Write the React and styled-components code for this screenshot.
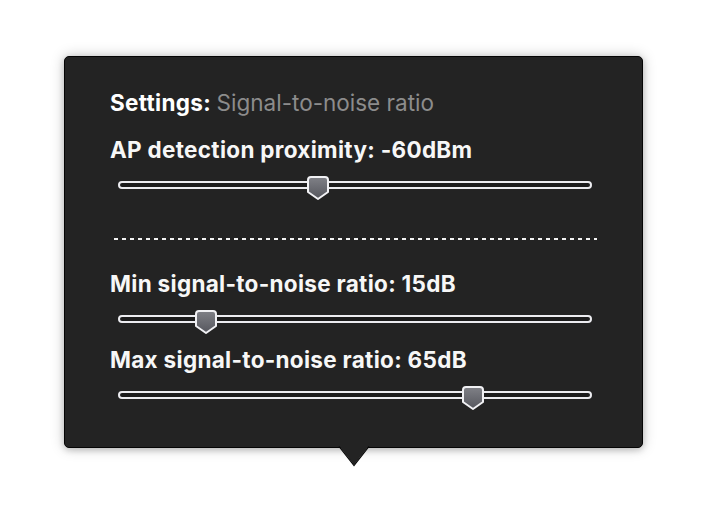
import React from "react";
import styled, { createGlobalStyle } from "styled-components";

const Global = createGlobalStyle`
  html, body { margin: 0; padding: 0; background: #ffffff; }
  body { font-family: Inter, "Noto Sans", "Liberation Sans", sans-serif; }
`;

const Page = styled.div`
  display: flex;
  align-items: flex-start;
  padding: 56px 0 0 64px;
  height: 522px;
  box-sizing: border-box;
`;

const Popover = styled.div`
  position: relative;
  width: 579px;
  height: 392px;
  box-sizing: border-box;
  background: #232323;
  border: 1px solid #050505;
  border-radius: 5px;
  box-shadow: 0 0 14px rgba(0, 0, 0, 0.22), 0 2px 6px rgba(0, 0, 0, 0.18);
  padding: 33px 0 0 45px;
  display: flex;
  flex-direction: column;
`;

const Arrow = styled.svg`
  position: absolute;
  left: 274px;
  bottom: -20px;
  width: 30px;
  height: 21px;
  overflow: visible;
`;

const Title = styled.div`
  font-size: 22.5px;
  line-height: 26px;
  font-weight: 700;
  color: #ffffff;
  letter-spacing: 0.3px;
  white-space: nowrap;
`;

const Subtle = styled.span`
  font-weight: 400;
  color: #8c8c8c;
  letter-spacing: 0px;
`;

const Label = styled.div`
  margin-top: ${(p) => p.$gap}px;
  font-size: 22.5px;
  line-height: 26px;
  font-weight: 700;
  color: #f7f7f7;
  letter-spacing: 0.3px;
  white-space: nowrap;
`;

const SliderWrap = styled.div`
  position: relative;
  margin: 13px 0 0 8px;
  width: 474px;
  height: 24px;
`;

const Track = styled.div`
  position: absolute;
  left: 0;
  right: 0;
  top: 5px;
  height: 8px;
  box-sizing: border-box;
  border: 2px solid #ececf0;
  border-radius: 4px;
  background: #1c1c1c;
`;

const Thumb = styled.svg`
  position: absolute;
  top: 0;
  width: 22px;
  height: 24px;
`;

const Divider = styled.div`
  margin: 38px 0 0 4px;
  width: 483px;
  height: 2px;
  background-image: linear-gradient(to right, #f2f2f2 0 4px, transparent 4px 8px);
  background-size: 8px 2px;
  background-repeat: repeat-x;
`;

function Slider({ value, id }) {
  const left = value * (474 - 22);
  return (
    <SliderWrap>
      <Track />
      <Thumb viewBox="0 0 22 24" style={{ left: `${left}px` }}>
        <defs>
          <linearGradient id={id} x1="0" y1="0" x2="0" y2="1">
            <stop offset="0" stopColor="#808187" />
            <stop offset="1" stopColor="#55565d" />
          </linearGradient>
        </defs>
        <path
          d="M4 1 H18 Q21 1 21 4 V16 L11 23 L1 16 V4 Q1 1 4 1 Z"
          fill={`url(#${id})`}
          stroke="#f1f1f4"
          strokeWidth="2"
          strokeLinejoin="round"
        />
      </Thumb>
    </SliderWrap>
  );
}

export default function App() {
  return (
    <>
      <Global />
      <Page>
        <Popover>
          <Title>
            Settings: <Subtle>Signal-to-noise ratio</Subtle>
          </Title>
          <Label $gap={21}>AP detection proximity: -60dBm</Label>
          <Slider value={0.418} id="g1" />
          <Divider />
          <Label $gap={31}>Min signal-to-noise ratio: 15dB</Label>
          <Slider value={0.17} id="g2" />
          <Label $gap={13}>Max signal-to-noise ratio: 65dB</Label>
          <Slider value={0.761} id="g3" />
          <Arrow viewBox="0 0 30 21">
            <polygon points="0,0 15,19 30,0" fill="#232323" />
            <polyline points="0,0.5 15,19.5 30,0.5" fill="none" stroke="#050505" strokeWidth="1.2" />
          </Arrow>
        </Popover>
      </Page>
    </>
  );
}
